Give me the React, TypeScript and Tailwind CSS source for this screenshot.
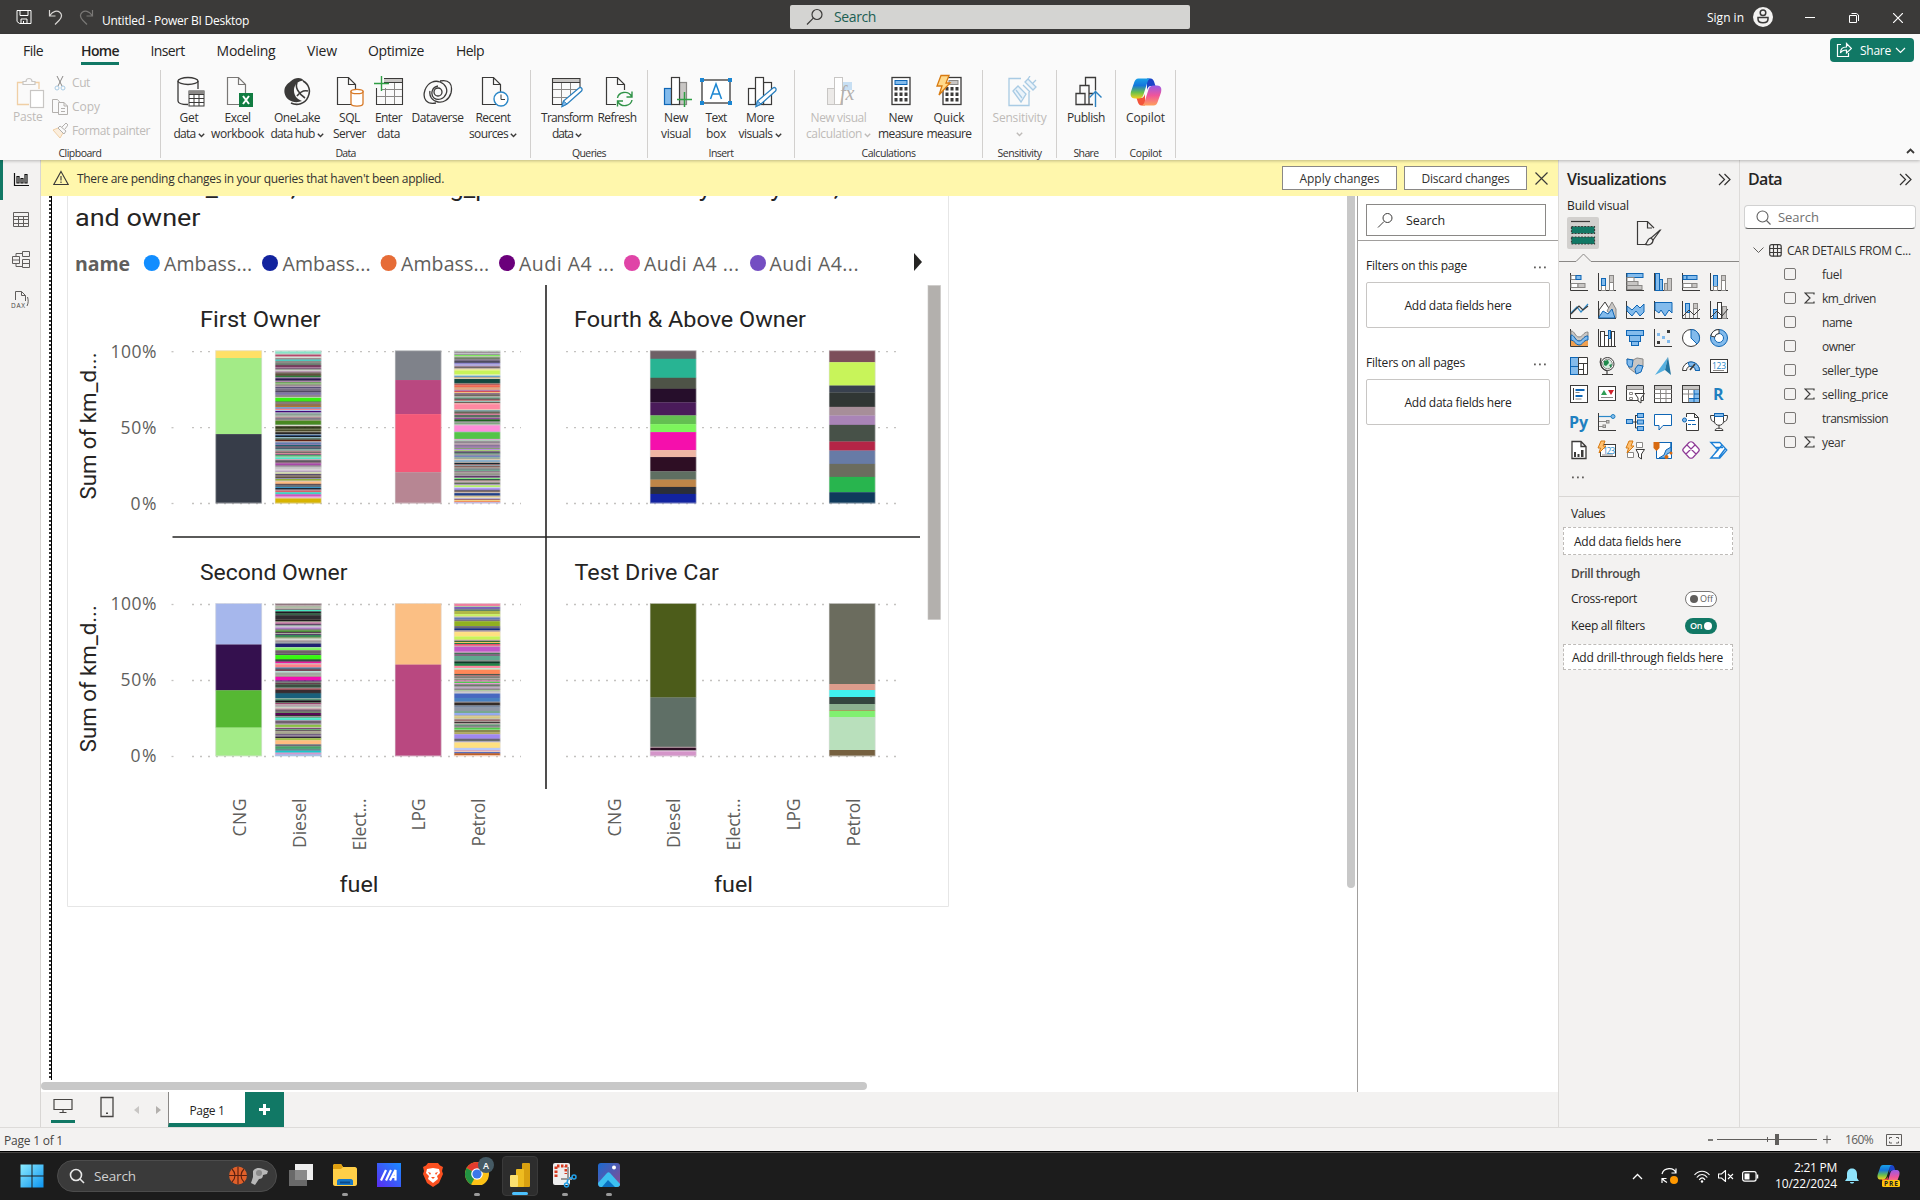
import { useLayoutEffect, useRef, type ReactNode } from "react";

const K = "#3b3a39";
const B = "#0f66b5";
const L = "#83bbec";
const G = "#c8c6c4";
const M = "#8a8886";
const GREEN = "#117865";
const UI = "'Open Sans','Noto Sans',sans-serif";
const DIN = "Roboto,'Liberation Sans',sans-serif";

/* Single line label whose tracking is adjusted so that it takes `w` pixels. */
function T({ w, c = "", children }: { w?: number; c?: string; children: string }) {
  const ref = useRef<HTMLSpanElement>(null);
  useLayoutEffect(() => {
    const el = ref.current;
    if (!el || !w) return;
    el.style.letterSpacing = "0px";
    const natural = el.getBoundingClientRect().width;
    el.style.letterSpacing = `${(w - natural) / children.length}px`;
  }, [w, children]);
  return (
    <span ref={ref} className={`inline-block shrink-0 whitespace-pre ${c}`}>
      {children}
    </span>
  );
}

function Ic({ w, h, c = "", children }: { w: number; h: number; c?: string; children: ReactNode }) {
  return (
    <svg width={w} height={h} viewBox={`0 0 ${w} ${h}`} fill="none" className={`shrink-0 ${c}`}>
      {children}
    </svg>
  );
}

const P = ({ d, s = K, f = "none", w = 1 }: { d: string; s?: string; f?: string; w?: number }) => (
  <path d={d} stroke={s} fill={f} strokeWidth={w} />
);
const Rc = ({ x, y, w, h, f = "none", s = K, sw = 1, r = 0 }: { x: number; y: number; w: number; h: number; f?: string; s?: string; sw?: number; r?: number }) => (
  <rect x={x} y={y} width={w} height={h} fill={f} stroke={s} strokeWidth={sw} rx={r} />
);

/* ---------- title bar ---------- */

function TitleBar() {
  return (
    <div className="flex h-[34px] shrink-0 items-center bg-[#3b3a39] text-white">
      <Ic w={16} h={16} c="ml-[16px]">
        <P s="#fff" d="M1 1.500h14v13H3.500L1 12.500zM4 1.500v5h8v-5M5 14v-4h6v4M7.500 14v-2" />
      </Ic>
      <Ic w={16} h={18} c="ml-[16px]">
        <P s="#d8d6d4" w={1.2} d="M1.500 2v6h6M1.800 7.500C5 3 9 2 12 4.500c3 3 1.500 5.500-1 8L7 16.500" />
      </Ic>
      <Ic w={16} h={18} c="ml-[14px]">
        <P s="#7a7876" w={1.2} d="M14.500 2v6h-6M14.200 7.500C11 3 7 2 4 4.500c-3 3-1.500 5.500 1 8l4 4" />
      </Ic>
      <div className="ml-[8px] mt-[7px] text-[12px] leading-[16px]"><T w={147}>Untitled - Power BI Desktop</T></div>
      <div className="ml-[541px] flex h-[24px] w-[400px] items-center rounded-[2px] bg-[#d4d4d2]">
        <Ic w={18} h={18} c="ml-[16px]">
          <circle cx="11" cy="6.500" r="5" stroke={K} strokeWidth="1.200" />
          <P w={1.2} d="M7.300 10.200L1 16.500" />
        </Ic>
        <div className="ml-[10px] text-[14px] leading-[20px] text-[#1c5f52]"><T w={42}>Search</T></div>
      </div>
      <div className="ml-[517px] mt-[2px] text-[12px] leading-[16px]"><T w={37}>Sign in</T></div>
      <Ic w={20} h={20} c="ml-[9px]">
        <circle cx="10" cy="10" r="10" fill="#f3f2f1" />
        <circle cx="10" cy="5.800" r="2.800" stroke={K} strokeWidth="1.500" />
        <P w={1.5} d="M5 10.500h10v1.500c0 5-10 5-10 0z" />
      </Ic>
      <Ic w={10} h={10} c="ml-[32px]"><P s="#fff" d="M0 5.500h10" /></Ic>
      <Ic w={10} h={10} c="ml-[34px] mt-[2px]"><P s="#fff" d="M.5 2.500h7v7h-7zM2.500 .5h5l2 1.500v6" /></Ic>
      <Ic w={10} h={10} c="ml-[34px] mt-[2px]"><P s="#fff" w={1.2} d="M0 0l10 10M10 0L0 10" /></Ic>
    </div>
  );
}

/* ---------- ribbon ---------- */

const page = "M1.500 1.500h11l7 7v20h-18zM12.500 1.500v7h7";

const ribbonIcons: Record<string, ReactNode> = {
  getdata: (
    <Ic w={28} h={32}>
      <P w={1.3} d="M1 5v20c0 2 4 3.500 10 3.500M21 5v8" />
      <ellipse cx="11" cy="5" rx="10" ry="3.500" stroke={K} strokeWidth="1.300" />
      <Rc x={12} y={15} w={15} h={15} f="#fff" />
      <rect x="12" y="15" width="15" height="3.500" fill={M} />
      <P d="M12 18.500h15M12 22.500h15M12 26.500h15M17 18v12M22 18v12" />
    </Ic>
  ),
  excel: (
    <Ic w={28} h={32}>
      <P s="#797775" w={1.2} d={page} />
      <rect x="13" y="17" width="14" height="14" fill="#107c41" />
      <P s="#fff" w={2} d="M17 20l6 8M23 20l-6 8" />
    </Ic>
  ),
  onelake: (
    <Ic w={28} h={30}>
      <path d="M8 4C12 0 19 0 21 4c-5-1-9 3-10 8-.500 5 2 10 8 12-7 3-16 0-17.500-8C.5 10 4 7 8 4z" fill={K} />
      <P w={1.6} d="M20 4c6 3 8 10 5 16-3 7-11 9-17 6M14 6c-2 4 1 10 8 15M25 14c-4-1-8 1-11 5" />
    </Ic>
  ),
  sql: (
    <Ic w={28} h={32}>
      <P w={1.2} d={page} />
      <path d="M15 15.500v12c0 3.500 12 3.500 12 0v-12z" fill="#fff" stroke="#d87a28" strokeWidth="1.300" />
      <ellipse cx="21" cy="15.500" rx="6" ry="2.200" fill="#fff" stroke="#d87a28" strokeWidth="1.300" />
    </Ic>
  ),
  enter: (
    <Ic w={30} h={32}>
      <rect x="10" y="2" width="19" height="4" fill={G} />
      <P w={1.1} d="M10 2.500h18.500v26h-26V12M10 6.500h18.500" />
      <P s={M} d="M8 13.500h20M3 20.500h25M11.500 12v16M20.500 7v21" />
      <P s="#2f9e44" w={1.4} d="M0 7.500h15M7.500 0v15" />
    </Ic>
  ),
  dataverse: (
    <Ic w={30} h={28}>
      <circle cx="15" cy="14" r="4" stroke={K} strokeWidth="1.300" />
      <P w={1.3} d="M13 25C4 27-1 21 2 12 5 4 12 2 17 4c6 2 8 8 6 12-2 5-8 7-12 4-4-4-2-11 4-12M17 3c9-2 13 3 11 12-2 7-8 10-13 9-6-1-9-6-8-11" />
    </Ic>
  ),
  recent: (
    <Ic w={28} h={32}>
      <P w={1.2} d={page} />
      <circle cx="20" cy="23" r="7" fill="#fff" stroke="#2b88c8" strokeWidth="1.400" />
      <P d="M20 18.500v5h4" />
    </Ic>
  ),
  transform: (
    <Ic w={32} h={32}>
      <rect x="2" y="2" width="27" height="4" fill={G} />
      <P w={1.1} d="M29 12V2.500H1.500v26h11M2 6.500h27" />
      <P s={M} d="M2 13.500h26M2 21.500h15M10.500 7v21M19.500 7v12" />
      <P s="#2b80bf" f="#fff" w={1.3} d="M28 12c2-1.500 4 1 2.500 3L16 28l-5 2.500 1.500-5.500z" />
      <P s="#2b80bf" f={L} d="M12.500 25l3.500 3-5 2.500z" />
    </Ic>
  ),
  refresh: (
    <Ic w={28} h={32}>
      <P w={1.2} d={page} />
      <rect x="11" y="14" width="17" height="17" fill="#fafafa" />
      <P s="#2f9247" w={1.4} d="M12.500 22c1-6 10-8 14-2M27 15.500V21h-5.500M27 24c-1 6-10 8-14 2M12.500 30.500V25H18" />
    </Ic>
  ),
  newvisual: (
    <Ic w={30} h={32}>
      <Rc x={1.5} y={12.500} w={7} h={16} f={L} s={B} sw={1.2} />
      <Rc x={16.500} y={6.500} w={7} h={22} f={G} s={M} sw={1.2} />
      <Rc x={8.500} y={1.500} w={8} h={27} f="#fff" sw={1.2} />
      <P s="#2f9e44" w={1.5} d="M14 23.500h15M21.500 16v15" />
    </Ic>
  ),
  textbox: (
    <Ic w={32} h={28}>
      <Rc x={2} y={2} w={28} h={23} sw={1.3} f="#fff" />
      {[[0, 0], [28, 0], [0, 23], [28, 23]].map(([x, y]) => (
        <rect key={`${x}-${y}`} x={x} y={y} width="4" height="4" fill="#1b86d2" />
      ))}
      <P s="#1b86d2" w={1.5} d="M10.500 21L16 6l5.500 15M12.500 16h7" />
    </Ic>
  ),
  more: (
    <Ic w={30} h={32}>
      <Rc x={1.500} y={12.500} w={7} h={16} f="#fff" sw={1.2} />
      <Rc x={16.500} y={6.500} w={8} h={22} f="#fff" sw={1.2} />
      <Rc x={8.500} y={1.500} w={8} h={27} f="#fff" sw={1.2} />
      <P s="#2b80bf" f="#fff" w={1.3} d="M26 12c2-1.500 4 1 2.500 3L14 28l-5 2.500 1.500-5.500z" />
      <P s="#2b80bf" f={L} d="M10.500 25l3.500 3-5 2.500z" />
    </Ic>
  ),
  calc: (
    <Ic w={30} h={32}>
      <Rc x={1.500} y={12.500} w={7} h={16} f="#eceae8" s={G} />
      <rect x="16" y="6" width="10" height="8" fill="#c7dff3" />
      <Rc x={8.500} y={1.500} w={8} h={27} f="#fff" s={G} />
      <text x="14" y="24" fontFamily="'Liberation Serif',serif" fontStyle="italic" fontSize="20" fill="#b3b0ad">fx</text>
    </Ic>
  ),
  measure: (
    <Ic w={20} h={32}>
      <Rc x={1} y={1.500} w={18} h={27} f="#fff" sw={1.300} />
      <Rc x={4} y={4.500} w={12} h={4} f={L} s={B} />
      <g fill={K}>
        {[11, 16.500, 22].flatMap((y) => [3.500, 8.500, 13.500].map((x) => <rect key={`${x}${y}`} x={x} y={y} width="3" height="3.500" />))}
      </g>
    </Ic>
  ),
  quick: (
    <Ic w={26} h={32} c="overflow-visible">
      <Rc x={7} y={1.500} w={18} h={27} f="#fff" sw={1.300} />
      <Rc x={13} y={4.500} w={9} h={4} f={G} s={M} />
      <g fill={K}>
        {[11, 16.500, 22].flatMap((y) => [9.500, 14.500, 19.500].map((x) => <rect key={`${x}${y}`} x={x} y={y} width="3" height="3.500" />))}
      </g>
      <P s="#d87a10" f="#ffd98a" w={1.300} d="M5-.5h8L10 7h4L3 19l3-9H1z" />
    </Ic>
  ),
  sensitivity: (
    <Ic w={30} h={32}>
      <P s="#a9cbe4" w={1.3} d="M14 2.500H2v27h20V16" />
      <P s="#a9cbe4" w={1.300} f="#eaf3fa" d="M6 15l5-5 8 8-5 8zM9 14l6 8M18 6l3-3 8 8-3 3zM21 3l2-3M26 7l3-3M16 9l7 7" />
    </Ic>
  ),
  publish: (
    <Ic w={28} h={32}>
      <P w={1.300} d="M2 28.500h9v-11H2zM11 28.500h8M6 17V9.500h9v19M11.500 9V1.500h10v13M15 17.500h4" />
      <P s="#2b80bf" w={1.400} d="M21.500 31V15M15.500 21.500l6-6 6 6" />
    </Ic>
  ),
  copilot: (
    <Ic w={32} h={30}>
      <CopilotArt />
    </Ic>
  ),
};

function CopilotArt() {
  return (
    <>
      <defs>
        <linearGradient id="cpA" x1="0" y1="0" x2="0" y2="1">
          <stop offset="0" stopColor="#1aa0e8" /><stop offset=".35" stopColor="#1476dc" /><stop offset=".7" stopColor="#6cc04a" /><stop offset="1" stopColor="#f5d020" />
        </linearGradient>
        <linearGradient id="cpB" x1="0" y1="0" x2="0" y2="1">
          <stop offset="0" stopColor="#9a5be6" /><stop offset=".5" stopColor="#f0559a" /><stop offset="1" stopColor="#ffa05a" />
        </linearGradient>
      </defs>
      <path d="M17 1.500h3.500c2 0 3 1.500 3.500 3l1.500 4.500h-4c-3 0-3.500 1.500-4.500 4z" fill="#1b44c8" />
      <path d="M15 28.500h-3.500c-2 0-3-1.500-3.500-3L6.500 21h4c3 0 3.500-1.500 4.500-4z" fill="#f2543a" />
      <path d="M8.500 1.500H21c-2 0-3 1.500-4 5l-3.500 11c-1 3-2.500 4-5 4H5c-4 0-5-3-4-7L4 6c1-3 2-4.500 4.500-4.500z" fill="url(#cpA)" />
      <path d="M23.500 28.500H11c2 0 3-1.500 4-5l3.500-11c1-3 2.500-4 5-4H27c4 0 5 3 4 7l-3 8.500c-1 3-2 4.500-4.500 4.500z" fill="url(#cpB)" />
    </>
  );
}

type Btn = { i: string; w: number; a: [string, number]; b?: [string, number]; drop?: boolean; off?: boolean; sh?: boolean };
type Grp = { w: number; pl: number; label: [string, number]; items: Btn[] };

const groups: Grp[] = [
  {
    w: 370, pl: 5, label: ["Data", 20], items: [
      { i: "getdata", w: 46, a: ["Get", 19], b: ["data", 22], drop: true, sh: true },
      { i: "excel", w: 51, a: ["Excel", 26], b: ["workbook", 53], sh: true },
      { i: "onelake", w: 68, a: ["OneLake", 46], b: ["data hub", 44], drop: true },
      { i: "sql", w: 37, a: ["SQL", 21], b: ["Server", 33] },
      { i: "enter", w: 41, a: ["Enter", 27], b: ["data", 23] },
      { i: "dataverse", w: 57, a: ["Dataverse", 52] },
      { i: "recent", w: 54, a: ["Recent", 35], b: ["sources", 39], drop: true, sh: true },
    ],
  },
  {
    w: 117, pl: 8, label: ["Queries", 34], items: [
      { i: "transform", w: 56, a: ["Transform", 52], b: ["data", 21], drop: true },
      { i: "refresh", w: 44, a: ["Refresh", 39], sh: true },
    ],
  },
  {
    w: 147, pl: 10, label: ["Insert", 25], items: [
      { i: "newvisual", w: 36, a: ["New", 24], b: ["visual", 30], sh: true },
      { i: "textbox", w: 44, a: ["Text", 21], b: ["box", 20] },
      { i: "more", w: 44, a: ["More", 28], b: ["visuals", 34], drop: true, sh: true },
    ],
  },
  {
    w: 188, pl: 7, label: ["Calculations", 54], items: [
      { i: "calc", w: 73, a: ["New visual", 56], b: ["calculation", 56], drop: true, off: true, sh: true },
      { i: "measure", w: 51, a: ["New", 24], b: ["measure", 45] },
      { i: "quick", w: 46, a: ["Quick", 31], b: ["measure", 45] },
    ],
  },
  { w: 74, pl: 0, label: ["Sensitivity", 44], items: [{ i: "sensitivity", w: 73, a: ["Sensitivity", 54], b: ["", 0], drop: true, off: true, sh: true }] },
  { w: 59, pl: 0, label: ["Share", 25], items: [{ i: "publish", w: 58, a: ["Publish", 38], sh: true }] },
  { w: 60, pl: 0, label: ["Copilot", 32], items: [{ i: "copilot", w: 59, a: ["Copilot", 39] }] },
];

function RibbonGroup({ g }: { g: Grp }) {
  return (
    <div className="flex h-[88px] flex-col border-r border-[#d2d0ce]" style={{ width: g.w }}>
      <div className="flex h-[76px] shrink-0" style={{ paddingLeft: g.pl }}>
        {g.items.map((b) => (
          <div key={b.i} className={`flex shrink-0 flex-col items-center text-[12px] leading-[16px] ${b.off ? "text-[#bebbb8]" : "text-[#323130]"}`} style={{ width: b.w }}>
            <div className={`flex h-[40px] items-center pt-[3px] ${b.sh ? "pl-[4px]" : ""}`}>{ribbonIcons[b.i]}</div>
            <T w={b.a[1]}>{b.a[0]}</T>
            {b.b && (
              <div className="flex items-center gap-[2px]">
                {b.b[0] && <T w={b.b[1]}>{b.b[0]}</T>}
                {b.drop && <Ic w={7} h={5} c={b.b[0] ? "mt-[2px]" : "mt-[6px]"}><P s={b.off ? "#bebbb8" : K} w={1.4} d="M.8 .8l2.700 2.700L6.200 .8" /></Ic>}
              </div>
            )}
          </div>
        ))}
      </div>
      <div className="flex justify-center text-[10.500px] leading-[14px] text-[#323130]"><T w={g.label[1]}>{g.label[0]}</T></div>
    </div>
  );
}

function Ribbon() {
  const menu: [string, number, string][] = [
    ["File", 20, "ml-[23px]"], ["Home", 38, "ml-[38px]"], ["Insert", 34, "ml-[31.500px]"], ["Modeling", 59, "ml-[32px]"],
    ["View", 30, "ml-[31.500px]"], ["Optimize", 56, "ml-[31px]"], ["Help", 28, "ml-[32px]"],
  ];
  return (
    <div className="relative z-10 h-[126px] shrink-0 bg-[#fafafa] shadow-[0_1px_3px_rgba(0,0,0,0.25)]">
      <div className="flex h-[36px] items-start">
        {menu.map(([t, w, ml]) => (
          <div key={t} className={`${ml} mt-[7px] flex h-[24px] flex-col text-[14px] leading-[19px] text-[#252423] ${t === "Home" ? "border-b-[3px] border-[#117865] font-semibold" : ""}`}>
            <T w={w}>{t}</T>
          </div>
        ))}
        <div className="ml-auto mr-[6px] mt-[4px] flex h-[24px] w-[84px] items-center rounded-[4px] bg-[#117865] text-[12px] text-white">
          <Ic w={16} h={16} c="ml-[6px]">
            <P s="#fff" w={1.2} d="M5 2.500H1.500v12h11V11M4.500 11c0-4 2-6 6-6V1.500l5 5-5 4.500V8c-3 0-5 1-6 3z" />
          </Ic>
          <div className="ml-[8px] mt-[2px] leading-[16px]"><T w={31}>Share</T></div>
          <Ic w={11} h={7} c="ml-[4px]"><P s="#fff" w={1.2} d="M1 1l4.500 4.500L10 1" /></Ic>
        </div>
      </div>
      <div className="flex">
        <div className="flex h-[88px] w-[161px] flex-col border-r border-[#d2d0ce] text-[12px] leading-[16px] text-[#bebbb8]">
          <div className="flex h-[76px] shrink-0">
            <div className="flex w-[42px] flex-col pl-[13px]">
              <Ic w={32} h={32} c="ml-[3px] mt-[7px]">
                <P s="#f0cfa5" w={1.3} d="M7 5.500H1.500v22H13M19 5.500h4V12" />
                <P s={G} w={1.2} d="M7 7.500v-3h3c0-4 6-4 6 0h3v3z" />
                <Rc x={14.500} y={13.500} w={13} h={17} f="#fff" s={G} sw={1.2} />
              </Ic>
              <T w={28}>Paste</T>
            </div>
            <div className="flex flex-col pl-[10px] pt-[1px]">
              <div className="flex h-[24px] items-center">
                <Ic w={16} h={16}>
                  <P s={M} d="M5 1l5 10M11 1L6 11" />
                  <circle cx="5" cy="13" r="2" stroke="#a9cbe4" /><circle cx="11" cy="13" r="2" stroke="#a9cbe4" />
                </Ic>
                <div className="ml-[4px]"><T w={18}>Cut</T></div>
              </div>
              <div className="flex h-[24px] items-center">
                <Ic w={16} h={16}><P s="#b3b0ad" d="M6 13.500H.5V.5h5l2.500 3M6.500 3.500H12l3.500 3.500v8.500h-9zM12 3.500V7h3.500M9 9.500h4M9 12.500h4" /></Ic>
                <div className="ml-[4px]"><T w={28}>Copy</T></div>
              </div>
              <div className="flex h-[24px] items-center">
                <Ic w={16} h={16}>
                  <P s="#f0cfa5" f="#fbeedd" d="M1 7l5-2 5 5-3 5z" />
                  <P s="#b3b0ad" d="M6 5l2-2 6 5-2 3zM10 4l4-4 2 2-3 4" />
                </Ic>
                <div className="ml-[4px]"><T w={78}>Format painter</T></div>
              </div>
            </div>
          </div>
          <div className="flex justify-center text-[10.500px] leading-[14px] text-[#323130]"><T w={43}>Clipboard</T></div>
        </div>
        {groups.map((g) => <RibbonGroup key={g.label[0]} g={g} />)}
        <Ic w={9} h={6} c="ml-auto mr-[5px] mt-[78px]"><P w={1.800} d="M1 5l3.500-3.500L8 5" /></Ic>
      </div>
    </div>
  );
}

/* ---------- chart ---------- */

type Seg = [string, number];

/* "colour height" pairs, top to bottom, in pixels. */
const parse = (s: string): Seg[] => s.trim().split(/\s+/).map((p) => { const [c, h] = p.split(":"); return [`#${c}`, Number(h)]; });

const bars: { x: number; y: number; s: Seg[] }[] = [
  { x: 215.500, y: 350.500, s: parse("ffe066:7.500 a3eb87:76 373d49:69") },
  {
    x: 275, y: 350.500, s: parse(`b8ddd0:1 86e5c8:2 c0b8b8:1 b6486c:1.500 d0a0a8:1 c8e8d8:1 75555c:1 4fc8be:1.500 8c8c88:2 6b7c70:2 622346:1.500 a87898:1.500
    5a3858:1 a0b49a:1 dcc8d8:1 8a6080:1 706858:1.500 55402c:1.500 2e7c3a:1.500 908098:1 280e50:1.500 605870:1 b088b0:1 72a060:1.500 94c080:1 706068:1 ccb8c0:1
    585078:1.500 7a7088:2 504860:1.500 807898:1.500 584898:1 9890a0:1 605850:1 d8d0d8:1 38f010:3 50a040:1 8a7a78:2 907050:2 b06820:1 6898d0:1.500 ff7078:1
    c8e0f8:1 400878:1.500 b0a8b8:1 68a090:1 888078:1 a0c8b8:1 c08890:1 807888:2 98a080:1 488820:3 70a060:1 d8d8c8:1 504c38:1 202808:1.500 808860:1 303010:1
    a0a088:1 504840:1 202020:1 8898a8:1 305080:1 101820:1 90b8c8:1 507060:1.500 602010:1.500 b0a0a0:1 6078b0:1.500 9080b0:1 206070:1.500 703850:1 486070:1.500
    80a8a0:1.500 c08890:1 586860:1 e09098:1 885880:1 50b070:1.500 90c8a0:1 50e8c8:1.500 c0a0b0:1 605860:2 805870:1 a848a8:2 787078:1 a8a0a8:1 c8c8c8:2 e0d8e0:1
    a888b8:1 c8d8b8:1 e8e8b0:1 504870:1 887870:2 605040:1 9090b0:1 88a830:1.500 d8c0b0:1 ffbc80:2 604850:1 687078:2 3898c8:1 182838:1.500 a08890:1 d86068:1.500
    40d0c0:2 c850b8:1.500 e088d8:1.500 e0b8c0:1 d8b400:4.500`),
  },
  { x: 395, y: 350.500, s: parse("7f828a:29.500 b94880:34 f45878:58 b78693:31") },
  {
    x: 454, y: 350.500, s: parse(`c8e8d0:1 887880:1 c8c8d0:1 98989a:1 80e860:1 b0c8a0:1 708068:2 7a6888:1 504c60:2 9088d0:1.500 b0a8d8:1.500 907080:1 504848:1 e0c8b0:1 e8f080:1
    c8f458:3.500 e8f0c0:1 50a0d8:1 c0a890:1 d8d0b0:1 104840:3.500 8a8078:1 b05858:1 f06850:2 c89070:1 f0a060:1 b090c0:1 d04058:1 f0c080:1 907090:1 706860:2 b0a8a8:1
    50a078:1 584048:1 c87878:1 98c8c0:1 706058:1 f0a8a8:1 ff88a0:4.500 e8c0b0:1 488890:1 686858:2 f080a8:1 587060:2 988890:1 803090:1 206020:2 a090a0:1 80a880:1.500
    b8b0b0:1 ff8cd8:5 d0a0d0:1 54c448:6 d8a8d0:1 b0c8b8:1 908890:2 b098a8:1.500 887098:1.500 a880b8:1 80a070:1 b890d8:1 a0c870:1 705878:1 303848:1 68a078:1 988898:1
    6878c0:1 90b0a8:1 a0a898:1 d8c8b0:1 80a8c8:1.500 b8b0a8:1 182830:1 906868:1 8098a0:1 703830:1 a8a098:1 606870:1 70a890:1.500 805870:1 a8a8a0:1 707860:1 b8b0b8:1
    583860:1 907898:1 80e880:1 184030:1 9a8078:1 c8a8b0:1 60705c:1.500 a890b8:1 b8f068:1.500 d0d8e8:1 a890f0:1.500 686078:1 807068:1 c8b8b0:1 204088:2 787888:1
    ffe078:1 c8d0f8:1 905870:1 f0d080:1 f09060:1 b8a8e0:1`),
  },
  {
    x: 650, y: 350.500,
    s: parse("6e6066:8.300 28b493:19 4e5347:11 260e2b:13.700 4a1b5a:13 64bf51:8.700 7df45c:8 f50fac:18 efb5a4:7 2e0e24:14.300 5f6f62:8.300 be8548:7.300 2b2e38:7 1223a0:9.300"),
  },
  {
    x: 829, y: 350.500,
    s: parse("7c4e5a:11.700 c8f45a:23.300 38404e:7 303634:14.300 a78e99:8.700 a984b7:9.300 475148:16.700 b52546:9 677ba6:13.300 6b6c5e:13 28b54e:15.300 0f3a5c:11"),
  },
  { x: 215.500, y: 603.300, s: parse("a6b7ec:41.200 34104e:45.800 56b833:37.300 a3eb87:28.400") },
  {
    x: 275, y: 603.300, s: parse(`907880:2 c0b0b0:1 88a880:1 c8d0c0:1 906070:1 48e8c0:1.500 201820:1.500 386048:2 302c30:3.500 504848:1 181818:1 888878:1 c880a8:1.500 604868:1.500 90b8a0:1
    d8b8e0:1 a878c0:1.500 706870:1 489030:1.500 584050:1 a8a8a0:1 503860:1 208048:1.500 88a070:1.500 b8c8b0:1 e0d8d8:1 807070:1 a8a8b0:1 808890:1 202070:3 a0e0a0:1
    80f060:2 706068:3 585060:1.500 38f810:4 083010:1 202838:1 e8189c:1.500 c0a8b8:1 ff8088:3 2878b0:1 504048:1 784858:1.500 b0f0e0:1 a0a8a0:3 90b080:1 f010b0:3.500
    401060:1 788078:1.500 502838:1 385040:3 607870:1 c84858:1 382c30:3 285868:1 18607c:4 80a898:1 287850:1 181018:1.500 607060:1 903060:1 b8a0a8:2 98a8a0:1 d8d8c8:1
    b87890:1 706070:2 70a068:1 580858:2 303830:1 a08898:1 48a880:1 40f0d0:1.500 a0a0b0:1 706070:2.500 b0a0b8:1 88c040:2 c8c8b0:1 784878:1 68a878:1 605058:1 a8a890:2.500
    706080:1 9888a0:1.500 302838:1.500 a0c048:2 ffbc80:3.500 808080:1 585060:1 48a068:2 209060:1 706888:1 18c8c8:1.500 70a8c8:1 e080c0:1 88b0e8:1.500`),
  },
  { x: 395, y: 603.300, s: parse("fbbf84:61.300 b94880:91.400") },
  {
    x: 454, y: 603.300, s: parse(`f080a0:2.500 b0c8a8:1 7050b8:1.500 808890:1 588068:1 b0b848:3 c8f060:2 c8c0a0:1 6078b8:2 787080:1.500 90b020:4.500 686878:1 585060:1 183080:2 c8b0a0:1.500 ffe080:4
    c8f458:3 d0a8b0:1 206030:1 f8c860:1 207848:1 f04868:1.500 c8b0b8:1 c058c8:4.500 e0a0d0:1 387850:1 806880:2 60a890:4 707870:1 103828:2 208848:2 ff88a0:2 c0e8d0:1.500
    ff8858:4 505850:1 b07070:1 808078:2 b0a0a0:1 607858:1 f070c8:1 50c850:1.500 f088d8:1 687868:1.500 a098a0:1.500 c0a8c8:1 706870:1 b0c8a0:1.500 b8b0b8:1 c8c8c8:1
    4868c0:4 4880c0:3.500 908888:1 342c28:2.500 7888a0:2 9098a8:3 78a890:2 90a8f0:2 b0a890:1 d8c880:2 b0b8a8:1 803840:1 c0b8b0:1 403838:1.500 c8b0b0:1 409860:1
    706070:1 a0a0a0:1 48c040:1 80e880:1 888850:2 b0a860:2 a088f0:4 686078:1.500 505850:1 b0a8c8:1 ffe080:5 b8c8f8:2 d8a8c0:1 e8c8b8:1 3050b8:1 b85820:1.500 ffb890:1`),
  },
  { x: 650, y: 603.300, s: parse("4c5c1a:94.200 5f6f66:49.300 c0a8b0:1 2e0e24:2.700 e8dce8:.8 d495c9:4.700") },
  { x: 829, y: 603.300, s: parse("6b6c5e:80.700 dc9c8c:6 40f0ee:7 34443e:7 8cb090:6 a3a060:1 80f070:6 b9e0bc:33 75603f:6") },
];

function Chart() {
  const tx = (x: number, y: number, t: string, len: number, size: number, opts: { rot?: boolean; end?: boolean; font?: string; fill?: string; bold?: boolean } = {}) => (
    <text
      key={`${t}${x}${y}`}
      transform={`translate(${x} ${y})${opts.rot ? " rotate(-90)" : ""}`}
      textLength={len}
      lengthAdjust={opts.font ? "spacingAndGlyphs" : "spacing"}
      textAnchor={opts.end ? "end" : "start"}
      fontFamily={opts.font ?? UI}
      fontSize={size}
      fontWeight={opts.bold ? 700 : 400}
      fill={opts.fill ?? "#605e5c"}
    >{t}</text>
  );
  const dk = { font: DIN, fill: "#252423" };
  return (
    <svg width="1306" height="884" viewBox="41 196 1306 884" className="shrink-0 overflow-hidden">
      <path d="M51.500 196v884" stroke="#000" strokeWidth="1" />
      <path d="M50 196v884" stroke="#333" strokeWidth="2" strokeDasharray="2 2" />
      <path d="M67.500 196v710.500h881V196" fill="none" stroke="#e6e6e6" />
      {tx(76, 195.600, "Sum of km_driven,", 220, 23, dk)}
      {tx(303, 195.600, "Sum of selling_price", 228, 23, dk)}
      {tx(540, 195.600, "and Count of year by fuel,", 299, 23, dk)}
      {tx(846, 195.600, "name", 62, 23, dk)}
      {tx(75, 225.700, "and owner", 125.500, 23.500, dk)}
      {tx(75, 270.700, "name", 55, 19.500, { bold: true })}
      {([[151.800, 164, "Ambass...", 88, "#118dff"], [270, 282.500, "Ambass...", 88, "#12239e"], [388.600, 401, "Ambass...", 88, "#e66c37"], [507, 519, "Audi A4 ...", 95, "#6b007b"], [632, 644, "Audi A4 ...", 95, "#e044a7"], [758, 769.500, "Audi A4...", 89, "#744ec2"]] as [number, number, string, number, string][]).map(([cx, x, t, w, c]) => (
        <g key={cx}>
          <circle cx={cx} cy="263" r="8" fill={c} />
          {tx(x, 270.700, t, w, 19.500)}
        </g>
      ))}
      <path d="M914 253l8 9-8 9z" fill="#252423" />
      {[351.700, 427.700, 503.500, 604.500, 680.500, 756.500].map((y) => (
        <g key={y} stroke="#c4c2c0" strokeWidth="1.300">
          <path d={`M171.500 ${y}h2`} />
          <path d={`M192 ${y}H521M566 ${y}H896`} strokeDasharray="2 6" />
        </g>
      ))}
      {bars.map((b) => {
        const total = b.s.reduce((a, s) => a + s[1], 0);
        const k = 152.700 / total;
        let y = b.y;
        return (
          <g key={`${b.x}-${b.y}`}>
            {b.s.map(([c, h], i) => {
              const r = <rect key={i} x={b.x} y={y} width="46.300" height={h * k + 0.2} fill={c} />;
              y += h * k;
              return r;
            })}
            <rect x={b.x + 0.2} y={b.y + 0.2} width="46" height="152.300" fill="none" stroke="#ddd" strokeOpacity=".55" />
          </g>
        );
      })}
      <path d="M546 285v504M172.500 537h747.500" stroke="#252423" strokeWidth="1.600" />
      <rect x="928" y="285.500" width="12.500" height="334" fill="#b3b0ad" stroke="#c8c6c4" strokeWidth=".6" />
      {tx(200, 326.700, "First Owner", 120.500, 22.500, dk)}
      {tx(574, 326.700, "Fourth & Above Owner", 232, 22.500, dk)}
      {tx(200, 580, "Second Owner", 147.500, 22.500, dk)}
      {tx(574.500, 580, "Test Drive Car", 144.500, 22.500, dk)}
      {[0, 252.700].map((o) => (
        <g key={o}>
          {tx(156.500, 357.500 + o, "100%", 46, 17.500, { end: true })}
          {tx(156.500, 433.500 + o, "50%", 36, 17.500, { end: true })}
          {tx(156.500, 509.500 + o, "0%", 26, 17.500, { end: true })}
          {tx(95.700, 499.500 + o, "Sum of km_d...", 147, 22.500, { ...dk, rot: true })}
        </g>
      ))}
      {[0, 374.500].map((o) => (
        <g key={o}>
          {tx(246 + o, 798.500, "CNG", 38, 17.500, { rot: true, end: true })}
          {tx(305.500 + o, 798.500, "Diesel", 49.500, 17.500, { rot: true, end: true })}
          {tx(365.500 + o, 798.500, "Elect...", 52, 17.500, { rot: true, end: true })}
          {tx(425 + o, 798.500, "LPG", 32, 17.500, { rot: true, end: true })}
          {tx(485 + o, 798.500, "Petrol", 48, 17.500, { rot: true, end: true })}
          {tx(339.500 + o, 891.500, "fuel", 39, 22.500, dk)}
        </g>
      ))}
    </svg>
  );
}

/* ---------- visual gallery ---------- */

const ax = <P d="M.5 0v17.500H18" />;
const viz: ReactNode[] = [
  <>{ax}<Rc x={1} y={2.500} w={5} h={4} f="#fff" s={M} /><Rc x={6} y={2.500} w={5} h={4} f={L} s={B} /><Rc x={1} y={10.500} w={7} h={4} f="#fff" s={M} /><Rc x={8} y={10.500} w={7} h={4} f={G} s={M} /></>,
  <>{ax}<Rc x={3.500} y={11.500} w={4} h={6} f="#fff" s={M} /><Rc x={3.500} y={5.500} w={4} h={7} f={L} s={B} /><Rc x={11.500} y={9.500} w={4} h={8} f="#fff" s={M} /><Rc x={11.500} y={2.500} w={4} h={7} f={G} s={M} /></>,
  <>{ax}<Rc x={1} y={.5} w={16} h={4} f={L} s={B} /><Rc x={1} y={4.500} w={7} h={4} f="#fff" s={M} /><Rc x={1} y={8.500} w={11} h={4} f={G} s={M} /><Rc x={1} y={12.500} w={15} h={4} f={G} s={M} /></>,
  <>{ax}<Rc x={1.500} y={.5} w={4} h={17} f={L} s={B} /><Rc x={5.500} y={6.500} w={3} h={11} f={L} s={B} /><Rc x={10.500} y={10.500} w={3} h={7} f={G} s={M} /><Rc x={13.500} y={5.500} w={4} h={12} f={G} s={M} /></>,
  <>{ax}<Rc x={1} y={2.500} w={4} h={4} f={L} s={B} /><Rc x={5} y={2.500} w={10} h={4} f={L} s={B} /><Rc x={1} y={10.500} w={9} h={4} f="#fff" s={M} /><Rc x={10} y={10.500} w={5} h={4} f={G} s={M} /></>,
  <>{ax}<Rc x={3.500} y={2.500} w={4} h={11} f={L} s={B} /><Rc x={3.500} y={13.500} w={4} h={4} f="#fff" s={M} /><Rc x={11.500} y={2.500} w={4} h={5} f={G} s={M} /><Rc x={11.500} y={7.500} w={4} h={10} f="#fff" s={M} /></>,
  <>{ax}<P d="M1 12l6-6 4 5 7-8" s="#2b88c8" w={1.200} /><P d="M1 13l5-5 3-3 4 4 5-4" w={1.200} /></>,
  <>{ax}<P d="M1 9l6-8 10 16H1z" f="#fff" /><P d="M18 17V8l-4-7-5 9z" f={G} s={M} /><P d="M1 16l4-6 5 3 4-5 3 9H1z" f={L} s={B} /></>,
  <>{ax}<P d="M1 5l5 4 5-5 3 3 4-4v8l-4 4-4-5-4 5-5-5z" f={L} s={B} /></>,
  <>{ax}<P d="M1 1.500h17V12l-3-3-4 6-4-6-2 3-4-3z" f={L} s={B} /></>,
  <>{ax}<Rc x={3.500} y={2.500} w={4} h={9} f={L} s={B} /><Rc x={11.500} y={2.500} w={4} h={5} f={G} s={M} /><P d="M3.500 11v6M7.500 12v5M11.500 8v9M15.500 8v9" s={M} /><P d="M1 15l6-6 5 5 6-6" /></>,
  <>{ax}<Rc x={3.500} y={8.500} w={4} h={9} f={L} s={B} /><Rc x={12.500} y={5.500} w={4} h={12} f={G} s={M} /><Rc x={7.500} y={1.500} w={4} h={16} f="#fff" /><P d="M1 16l6-6 5 5 6-7" /></>,
  <>{ax}<rect x="1" y="8" width="17" height="9" fill="#f0a050" /><P d="M1 2c4 0 4 6 8 6s4-5 9-5v4c-5 0-5 5-9 5S5 7 1 7z" f={G} s={M} /><P d="M1 6c4 0 4 6 8 6s4-5 9-5v4c-5 0-5 5-9 5S5 11 1 11z" f={L} s={B} /></>,
  <>{ax}<Rc x={2.500} y={2.500} w={4} h={15} f="#fff" /><Rc x={6.500} y={6.500} w={4} h={11} f="#fff" /><Rc x={10.500} y={1.500} w={2} h={8} f={L} s={B} /><Rc x={13.500} y={2.500} w={3} h={15} f="#fff" /></>,
  <><Rc x={.5} y={1.500} w={17} h={5} f={L} s={B} /><Rc x={3.500} y={6.500} w={11} h={6} f={L} s={B} /><Rc x={5.500} y={12.500} w={7} h={4} f={L} s={B} /></>,
  <>{ax}<rect x="13" y="1" width="3" height="3" fill={K} /><rect x="3" y="12" width="3" height="3" fill={K} /><rect x="3" y="4" width="3" height="3" fill={L} /><rect x="8" y="7" width="3" height="3" fill={L} /><rect x="13" y="11" width="3" height="3" fill={L} /></>,
  <><circle cx="9" cy="9" r="8.500" fill="#fff" stroke={K} /><P d="M9 .5a8.500 8.500 0 0 1 6 14.500L9 9z" f={L} s={B} /></>,
  <><circle cx="9" cy="9" r="6.500" stroke={L} strokeWidth="4" /><circle cx="9" cy="9" r="8.500" stroke={B} /><circle cx="9" cy="9" r="4.500" stroke={B} fill="#fff" /><P d="M9 .5A8.500 8.500 0 0 0 .8 7l4 1A4.500 4.500 0 0 1 9 4.500z" f="#fff" /></>,
  <><Rc x={.5} y={.5} w={8} h={17} f={L} s={B} /><P s={B} d="M.5 9.500h8" /><P f="#fff" d="M8.500 .5h9v17h-9zM8.500 6.500h9M13.500 6.500v11M8.500 12.500h5" /></>,
  <><circle cx="9.500" cy="7" r="6.500" stroke={K} fill="#fff" /><circle cx="9.500" cy="7" r="4.800" fill="#d6ece0" stroke={M} /><path d="M6 4l4-1 1 3-3 3-2-1zM11 8l3-1-1 4z" fill="#1f8a4c" /><P w={1.200} d="M3 1c-2 5 0 11 6 13v3M4 17.500h11" /></>,
  <><P d="M1 2l6 1 4-2 6 1v7l-4 7-5-1-5-4z" f={G} s={M} /><P d="M1 2l6 1-1 7H3L1 7zM9 12l3-4 5 1-2 6-5 2z" f={L} s={B} /></>,
  <><path d="M14 0L1 18l10-5z" fill="#56b0e0" /><path d="M14 0l3 18-6-5z" fill="#2274a0" /></>,
  <><P d="M.5 13.500a8.500 8.500 0 0 1 17 0h-4a4.500 4.500 0 0 0-9 0z" f="#fff" /><P d="M6 5.500a8.500 8.500 0 0 1 11.500 8h-4a4.500 4.500 0 0 0-6-4z" f={L} s={B} /><P w={1.600} d="M8 13l5-6" /></>,
  <><Rc x={.5} y={2.500} w={17} h={13} f="#fff" /><text x="2" y="11.500" fontFamily={UI} fontSize="8.500" fill="#2b88c8" textLength="14">123</text><P s={M} d="M3 13.500h11" /></>,
  <><Rc x={.5} y={.5} w={17} h={17} f="#fff" /><P d="M3.500 3v12" /><P s={B} w={2} d="M5.500 5h9M5.500 11h7" /><P s={M} d="M5.500 7.500h4M5.500 14h6" /></>,
  <><Rc x={.5} y={1.500} w={17} h={14} f="#fff" /><path d="M3 10l3-5 3 5z" fill="#2f9e55" /><path d="M10 5h6l-3 5z" fill="#d0202a" /><P s={M} d="M3 12.500h12" /></>,
  <><P f="#fff" d="M.5 .5h17v15H.5z" /><rect x="1" y="1" width="16" height="3" fill={G} /><P s={M} d="M.5 4.500h17M3.500 7.500h3v2h-3zM3.500 12.500h3v2h-3z" /><P f="#fff" d="M9 8.500h9.500L15 13v5l-3-2v-3z" /></>,
  <><Rc x={.5} y={.5} w={17} h={17} f="#fff" /><rect x="1" y="1" width="16" height="3" fill={G} /><P s={M} d="M.5 4.500h17M.5 8.500h17M.5 13.500h17M6.500 4v13M12 4v13" /></>,
  <><Rc x={.5} y={.5} w={17} h={17} f="#fff" /><rect x="1" y="1" width="16" height="3" fill={G} /><path d="M12 5h6v13H7v-5h5z" fill={L} /><P s={B} d="M12 4.500v13M7 13.500h11M12 9h6" /><P s={M} d="M.5 4.500h17M.5 9h11M6.500 4v13" /><Rc x={.5} y={.5} w={17} h={17} /></>,
  <><text x="3" y="14.500" fontFamily={UI} fontWeight="700" fontSize="16" fill="#1f80c0">R</text></>,
  <><text x="-1" y="14.500" fontFamily={UI} fontWeight="700" fontSize="16" fill="#1f80c0" textLength="19">Py</text></>,
  <>{ax}<P s="#2b88c8" w={1.200} d="M1 3.500h12" /><circle cx="15" cy="3.500" r="2" fill={L} stroke="#1f80c0" /><P s={M} d="M1 8.500h7M1 13.500h4" /><Rc x={8.500} y={7.500} w={2.500} h={2.500} s={M} f={G} /><Rc x={5} y={12} w={2.500} h={2.500} s={M} f={G} /></>,
  <><P d="M7 9h5M9 2.500h3M9.500 2v13h3" /><Rc x={.5} y={6.500} w={6} h={4} f={L} s={B} /><Rc x={11.500} y={.5} w={6} h={4} f={L} s={B} /><Rc x={11.500} y={7} w={6} h={4} f={L} s={B} /><Rc x={11.500} y={13.500} w={6} h={4} f={L} s={B} /></>,
  <><P s={B} f="#fff" d="M.5 1.500h17v11H9l-4 4.500v-4.500H.5z" /></>,
  <><P f="#fff" d="M4.500 4V.5h8l4 4v13h-12V10M12.500 .5v4h4" /><circle cx="2.500" cy="7" r="2" fill={L} stroke={B} /><P s={B} d="M6 7.500h7M6 11.500h3M10 11.500h4" /></>,
  <><P f="#fff" d="M4.500 .5h9v8c0 5-9 5-9 0zM4.500 2.500H.5c0 4 1 6 4 6.500M13.500 2.500h4c0 4-1 6-4 6.500M9 12v3M5 17.500c0-3 8-3 8 0z" /><P s={B} f={L} d="M4.500 .5h9v3h-9z" /></>,
  <><P f="#fff" w={1.300} d="M2 .5h9l5 5v12H2zM11 .5v5h5" /><path d="M4 11h2v5H4zM7.500 13h2v3h-2zM11 9h2.500v7H11z" fill={K} /></>,
  <><Rc x={2.500} y={3.500} w={15} h={12} f="#fff" /><text x="5" y="12.500" fontFamily={UI} fontSize="8.500" fill="#2b88c8" textLength="12">123</text><P s={M} d="M4 14h11" /><P s="#d87a10" f="#ffc070" d="M3 0h4L5 5h3L1 12l1.500-5H0z" /></>,
  <><P s={M} f="#fff" d="M10.500 1.500h6v5h-6zM1.500 11.500h6v5h-6z" /><P f="#fff" d="M10 8.500h8.500L15.500 13v5l-3-2v-3z" /><P s="#d87a10" f="#ffc070" d="M3 0h4L5 5h3L1 12l1.500-5H0z" /></>,
  <><P s={B} f="#fff" d="M2.500 1.500h15v16h-15z" /><path d="M17 1v5l-5 3-2 5-5 3h7l1-4 4-2z" fill={L} stroke={B} /><path d="M-.5 1h6v6l-3 3-3-3z" fill="#d86a10" /><circle cx="12.500" cy="16" r="2" fill="#d86a10" /><circle cx="17" cy="12" r="1.500" fill="#d86a10" /></>,
  <><P s="#8e3a96" w={1.200} f="#fff" d="M7 1.500Q9 0 11 1.500L16.500 7.500Q18 9 16.500 10.500L11 16.500Q9 18 7 16.500L1.500 10.500Q0 9 1.500 7.500zM5 4l9 9M13 4l-9 9" /></>,
  <><P s="#1b7fd6" w={1.300} f="#fff" d="M.8 1.500h9l7 7.500-7 8H.8L8 9zM5 6.500h8M5 12l7-8M9 16l6-8" /></>,
];

/* ---------- side panes ---------- */

const Chevs = () => <Ic w={13} h={13}><P s="#323130" w={1.200} d="M1 1l5.500 5.500L1 12M6.500 1L12 6.500 6.500 12" /></Ic>;
const Dots = ({ c }: { c: string }) => <Ic w={14} h={3} c={c}>{[0, 5, 10].map((x) => <rect key={x} x={x} y=".5" width="1.800" height="1.800" fill="#605e5c" />)}</Ic>;

function Filters() {
  return (
    <div className="flex w-[201px] shrink-0 flex-col border-l border-[#a19f9d] bg-white text-[12px] leading-[16px] text-[#252423]">
      <div className="flex h-[45px] items-center border-b border-[#a19f9d] pl-[8px]">
        <div className="mt-[4px] flex h-[32px] w-[180px] items-center border border-[#8a8886] pl-[10px]">
          <Ic w={17} h={17}><circle cx="10.500" cy="6" r="4.500" stroke={K} /><P d="M7 9.500L1 15.500" /></Ic>
          <div className="ml-[12px] mt-[1px] text-[12.500px]"><T w={39}>Search</T></div>
        </div>
      </div>
      {([["Filters on this page", 101, "mt-[17px]"], ["Filters on all pages", 99, "mt-[27px]"]] as [string, number, string][]).map(([t, w, mt]) => (
        <div key={t} className={`${mt} pl-[8px]`}>
          <div className="flex h-[16px] items-center justify-between pr-[10px]"><T w={w}>{t}</T><Dots c="mt-[3px]" /></div>
          <div className="mt-[8px] flex h-[46px] w-[184px] items-center justify-center rounded-[2px] border border-[#c8c6c4] pt-[2px]"><T w={107}>Add data fields here</T></div>
        </div>
      ))}
    </div>
  );
}

function Visualizations() {
  return (
    <div className="flex w-[181px] shrink-0 flex-col border-l border-[#dddbd9] bg-[#f3f2f1] text-[12px] leading-[16px] text-[#252423]">
      <div className="flex h-[36px] items-center justify-between pl-[8px] pr-[8px] pt-[2px] text-[16px] font-semibold leading-[22px]"><T w={99}>Visualizations</T><Chevs /></div>
      <div className="mt-[2px] pl-[8px]"><T w={62}>Build visual</T></div>
      <div className="mt-[3px] flex h-[36px] items-start pl-[8px]">
        <div className="flex h-[32px] w-[32px] items-center justify-center rounded-[2px] bg-[#d2d0ce]">
          <Ic w={26} h={26}>
            <P w={1.200} d="M1 1.500h19" />
            <Rc x={1.500} y={6.500} w={23} h={7} f={GREEN} s="none" /><Rc x={1.500} y={17} w={23} h={7} f={GREEN} s="none" />
            <path d="M1.500 6.500h23v7h-23zM1.500 17h23v7h-23z" stroke={K} strokeWidth="1.200" strokeDasharray="1.800 1.400" />
          </Ic>
        </div>
        <Ic w={26} h={26} c="ml-[37px] mt-[3px]">
          <P w={1.200} d="M18 8L11.500 1.500h-10v23H11M11.500 1.500V8H16M24.500 10L17 20l-2-2L24 10z" />
          <P w={1.200} d="M15 18c-4 0-3 5-6 6.500 4 1 8 0 8-4.500" />
        </Ic>
      </div>
      <Ic w={180} h={10}><P s={M} d="M0 8.500h17L24.500 1 32 8.500h148" /></Ic>
      <div className="grid grid-cols-[repeat(6,28px)] grid-rows-[repeat(7,28px)] pl-[11px] pt-[10px]">
        {viz.map((v, i) => <svg key={i} width="18" height="18" viewBox="0 0 18 18" fill="none" className="overflow-visible">{v}</svg>)}
      </div>
      <Dots c="ml-[13px] mt-[7px]" />
      <div className="mt-[17px] h-px bg-[#d8d6d4]" />
      <div className="mt-[9px] pl-[12px]"><T w={34}>Values</T></div>
      <div className="ml-[4px] mt-[5px] flex h-[28px] w-[170px] items-center border border-dashed border-[#bebbb8] bg-white pl-[10px] pt-[2px]"><T w={107}>Add data fields here</T></div>
      <div className="mt-[11px] pl-[12px] font-semibold text-[#484644]"><T w={69}>Drill through</T></div>
      <div className="mt-[9px] flex items-center justify-between pl-[12px] pr-[22px]"><T w={66}>Cross-report</T>
        <div className="flex h-[16px] w-[32px] items-center gap-[2px] rounded-full border border-[#797775] bg-white pl-[4px] text-[9px] leading-[12px] text-[#605e5c]"><span className="h-[8px] w-[8px] rounded-full bg-[#605e5c]" /><T w={13}>Off</T></div>
      </div>
      <div className="mt-[11px] flex items-center justify-between pl-[12px] pr-[22px]"><T w={74}>Keep all filters</T>
        <div className="flex h-[16px] w-[32px] items-center gap-[2px] rounded-full bg-[#117865] pl-[5px] text-[9px] font-semibold leading-[12px] text-white"><T w={12}>On</T><span className="h-[8px] w-[8px] rounded-full bg-white" /></div>
      </div>
      <div className="ml-[4px] mt-[10px] flex h-[26px] w-[170px] items-center border border-dashed border-[#bebbb8] bg-white pl-[8px] pt-[2px]"><T w={151}>Add drill-through fields here</T></div>
    </div>
  );
}

function DataPane() {
  const f: [string, number, boolean][] = [["fuel", 20, false], ["km_driven", 54, true], ["name", 30, false], ["owner", 33, false], ["seller_type", 56, false], ["selling_price", 66, true], ["transmission", 66, false], ["year", 23, true]];
  return (
    <div className="flex w-[181px] shrink-0 flex-col border-l border-[#dddbd9] bg-[#f3f2f1] text-[12px] leading-[16px] text-[#323130]">
      <div className="flex h-[36px] items-center justify-between pl-[8px] pr-[8px] pt-[2px] text-[16px] font-semibold leading-[22px] text-[#252423]"><T w={34}>Data</T><Chevs /></div>
      <div className="ml-[4px] mt-[9px] flex h-[24px] w-[172px] items-center rounded-[4px] border border-[#d1d1d1] border-b-[#616161] bg-white pl-[11px] text-[13px] text-[#707070]">
        <Ic w={15} h={15}><circle cx="6.500" cy="6.500" r="5.500" stroke="#616161" strokeWidth="1.100" /><P s="#616161" w={1.100} d="M10.500 10.500l4 4" /></Ic>
        <div className="ml-[7px]"><T w={41}>Search</T></div>
      </div>
      <div className="mt-[12px] flex h-[18px] items-center pl-[13px]">
        <Ic w={11} h={7}><P s="#605e5c" d="M.5 .5l5 5 5-5" /></Ic>
        <Ic w={13} h={13} c="ml-[5px]"><Rc x={.7} y={.7} w={11.500} h={11.500} r={2} sw={1.200} /><P w={1.100} d="M.5 4.500h12M.5 8.500h12M4.500 .5v12M8.500 .5v12" /></Ic>
        <div className="ml-[5px] mt-px"><T w={124}>CAR DETAILS FROM C...</T></div>
      </div>
      <div className="mt-[3px] flex flex-col">
        {f.map(([t, w, s]) => (
          <div key={t} className="flex h-[24px] items-center pl-[44px]">
            <div className="h-[12px] w-[12px] rounded-[2px] border border-[#797775]" />
            <div className="flex w-[26px] justify-end pr-[7px]">
              {s && <Ic w={11} h={12}><P w={1.200} d="M10 2.500V1H1l5 5-5 5h9V9.500" /></Ic>}
            </div>
            <div className="mt-[2px]"><T w={w}>{t}</T></div>
          </div>
        ))}
      </div>
    </div>
  );
}

/* ---------- bottom bars ---------- */

function Tabs() {
  return (
    <div className="flex h-[35px] shrink-0 bg-[#f3f2f1]">
      <div className="mb-[4px] ml-[10px] flex w-[24px] flex-col items-center justify-between border-b-[3px] border-[#117865] pt-[6px]">
        <Ic w={20} h={16}><P s="#484644" w={1.200} d="M1 1.500h18v10H1zM10 11.500v3M6.500 14.500h7" /></Ic>
      </div>
      <Ic w={14} h={22} c="ml-[25px] mt-[4px]"><P s="#484644" w={1.300} d="M1 1.500h12v19H1z" /><rect x="6" y="16.500" width="2" height="1.500" fill="#484644" /></Ic>
      <Ic w={5} h={8} c="ml-[20px] mt-[14px]"><path d="M5 0v8L0 4z" fill="#c8c6c4" /></Ic>
      <Ic w={5} h={8} c="ml-[17px] mt-[14px]"><path d="M0 0v8l5-4z" fill="#b3b0ad" /></Ic>
      <div className="ml-[7px] flex w-[77px] items-center justify-center border-b-[4px] border-l border-b-[#117865] border-l-[#8a8886] bg-white pt-[6px] text-[12px] leading-[16px] text-[#252423]"><T w={35}>Page 1</T></div>
      <div className="flex w-[39px] items-center justify-center bg-[#117865]"><Ic w={11} h={11}><P s="#fff" w={3} d="M0 5.500h11M5.500 0v11" /></Ic></div>
    </div>
  );
}

function StatusBar() {
  return (
    <div className="flex h-[24px] shrink-0 items-center border-t border-[#dddbd9] bg-[#f3f2f1] text-[12px] leading-[16px] text-[#484644]">
      <div className="ml-[4px] mt-[3px]"><T w={59}>Page 1 of 1</T></div>
      <Ic w={125} h={12} c="ml-auto mr-[12px]">
        <P s="#605e5c" w={1.600} d="M0 6h5" />
        <P s="#605e5c" d="M9 5.500h100M59.500 3v5M115 5.500h8M119 1.500v8" />
        <rect x="67" y="0" width="4" height="11" fill="#605e5c" />
      </Ic>
      <div className="mr-[13px] mt-px text-[#605e5c]"><T w={28}>160%</T></div>
      <Ic w={16} h={12} c="mr-[18px]"><P s="#605e5c" d="M.5 .5h15v11H.5zM3.500 5V3.500H6M10 3.500h2.500V5M3.500 7.500V9H6M10 9h2.500V7.500" /></Ic>
    </div>
  );
}

function Task({ w, on, active, children }: { w: string; on?: boolean; active?: boolean; children: ReactNode }) {
  return (
    <div className={`${w} flex h-[40px] shrink-0 flex-col items-center justify-between ${active ? "rounded-[4px] border border-[#3a3a3a] bg-[#2d2d2d] pt-[6px]" : "pt-[7px]"}`}>
      {children}
      <div className={`h-[3px] rounded-full ${active ? "w-[16px] bg-[#4cc2ff]" : on ? "w-[6px] bg-[#9a9a9a]" : "w-[6px]"}`} />
    </div>
  );
}

function Taskbar() {
  return (
    <div className="flex h-[48px] shrink-0 items-center border-t border-[#484644] bg-[#1c1c1c] pb-px text-white">
      <svg width="24" height="24" viewBox="0 0 24 24" className="ml-[20px] shrink-0">
        <defs><linearGradient id="win" x1="0" y1="0" x2="1" y2="1"><stop offset="0" stopColor="#8cecff" /><stop offset="1" stopColor="#0c94f0" /></linearGradient></defs>
        <path d="M.5 .5h11v11H.5zM12.500 .5h11v11h-11zM.5 12.500h11v11H.5zM12.500 12.500h11v11h-11z" fill="url(#win)" />
      </svg>
      <div className="ml-[13px] flex h-[32px] w-[220px] items-center rounded-full border border-[#4c4c4c] bg-[#3a3a3a]">
        <Ic w={16} h={16} c="ml-[11px]"><circle cx="7" cy="7" r="5.500" stroke="#e8e8e8" strokeWidth="1.600" /><P s="#e8e8e8" w={1.600} d="M11 11l4 4" /></Ic>
        <div className="ml-[9px] text-[13.500px] leading-[18px] text-[#d0d0d0]"><T w={42}>Search</T></div>
        <Ic w={42} h={22} c="ml-[92px]">
          <circle cx="10" cy="10.500" r="9" fill="#e0602a" />
          <P s="#5a2010" w={1.100} d="M10 1.500v18M1 10.500h18M4 4c4 4 4 9 0 13M16 4c-4 4-4 9 0 13" />
          <path d="M25 6c2-3 6-4 10-2l5 2-1 3-4 1c0 3-2 4-4 4l-4 6-4-2 2-6z" fill="#b8b8b8" /><circle cx="31" cy="8" r="3" fill="#8a8a8a" />
        </Ic>
      </div>
      <Task w="ml-[4px] w-[40px]"><Ic w={24} h={24}><rect x="6" y="1" width="18" height="16" fill="#eee" /><rect x="0" y="7" width="18" height="16" fill="#777" fillOpacity=".85" /></Ic></Task>
      <Task w="ml-[4px] w-[40px]" on><Ic w={24} h={24}><path d="M0 3c0-1 .5-2 2-2h6l2 3h12c1 0 2 1 2 2v15c0 1-1 2-2 2H2c-1 0-2-1-2-2z" fill="#ffcf48" /><path d="M0 3c0-1 .5-2 2-2h6l2 3-2 2H0z" fill="#e0a010" /><path d="M4 22v-4c0-1 1-2 2-2h12c1 0 2 1 2 2v4z" fill="#1878c8" /><rect x="7" y="18.500" width="10" height="2" fill="#0a4a8a" /></Ic></Task>
      <Task w="ml-[4px] w-[40px]">
        <Ic w={24} h={24}><defs><linearGradient id="mm" x1="1" y1="0" x2="0" y2="1"><stop offset="0" stopColor="#1a8cff" /><stop offset="1" stopColor="#5a2cf0" /></linearGradient></defs><rect width="24" height="24" fill="url(#mm)" /><P s="#fff" w={2.200} d="M4 17.500L9 7M9 17.500L14 7M13 17.500L18.500 7v10.500M15 14h3" /></Ic>
      </Task>
      <Task w="ml-[4px] w-[40px]"><Ic w={22} h={25}><path d="M6 0h10l2 2.500L21 4l-1 4 1 3-4 9-6 4-6-4-4-9 1-3-1-4 3-1.500z" fill="#fb5020" /><path d="M5 6l6-1 6 1 1 4-3 3 1 3-5 4-5-4 1-3-3-3z" fill="#fff" /><path d="M6 9l3 1-1 2zM16 9l-3 1 1 2zM9 14h4l-2 2z" fill="#fb5020" /></Ic></Task>
      <Task w="ml-[4px] w-[40px]" on>
        <Ic w={34} h={28} c="-mt-[6px]">
          <circle cx="17" cy="17" r="12" fill="#fbc116" /><path d="M17 17L6.600 11a12 12 0 0 1 20.800 0z" fill="#e33b2e" /><path d="M17 17l-6 10.400A12 12 0 0 1 6.600 11z" fill="#229342" />
          <circle cx="17" cy="17" r="5.800" fill="#fff" /><circle cx="17" cy="17" r="4.600" fill="#3a78e8" />
          <circle cx="26" cy="8" r="8" fill="#455a64" /><text x="23" y="11.500" fontFamily={UI} fontSize="9" fontWeight="600" fill="#fff">A</text>
        </Ic>
      </Task>
      <Task w="ml-[5px] w-[36px]" active><Ic w={20} h={24}><rect x="12" y="0" width="8" height="24" rx="1" fill="#d8a010" /><rect x="6" y="6" width="8" height="18" rx="1" fill="#eebc20" /><rect x="0" y="12" width="8" height="12" rx="1" fill="#fbe070" /></Ic></Task>
      <Task w="ml-[6px] w-[42px]" on><Ic w={24} h={26}><rect x="0" y="0" width="17" height="22" rx="2" fill="#eee" /><path d="M3 14V3h10v8" stroke="#d83a20" strokeWidth="3" strokeDasharray="2.500 1.500" /><P s="#999" w={2} d="M8 16h11M15 4v12" /><P s="#22a0e8" w={1.600} d="M15 16l-1 4M16 15l4-.5" /><circle cx="13.500" cy="22" r="2" stroke="#22a0e8" strokeWidth="1.500" /><circle cx="21" cy="14" r="2" stroke="#22a0e8" strokeWidth="1.500" /></Ic></Task>
      <Task w="ml-[2px] w-[42px]" on><Ic w={22} h={24}><defs><linearGradient id="ph" x1="0" y1="0" x2="1" y2="1"><stop offset="0" stopColor="#1a6ad0" /><stop offset="1" stopColor="#8a4a90" /></linearGradient></defs><rect width="22" height="24" rx="3" fill="url(#ph)" /><path d="M0 20l9-10c1-1 2-1 3 0l10 11c0 2-1 3-3 3H3c-2 0-3-2-3-4z" fill="#3cc0f0" /><path d="M4 24l6-7 7 7z" fill="#0a70c0" /><circle cx="16" cy="4.500" r="2" fill="#fff" /></Ic></Task>
      <div className="ml-auto flex items-center">
        <Ic w={11} h={7} c="mr-[18px]"><P s="#fff" w={1.300} d="M1 6l4.500-4.500L10 6" /></Ic>
        <Ic w={18} h={18} c="mr-[15px]"><P s="#fff" w={1.200} d="M1 7c2-7 12-7 14-1M15 1.500V6h-4.500M6 15.500C4 14.500 2 13 1.500 11.500M1 16v-4.500h4.500" /><circle cx="13" cy="13" r="4" fill="#ff9800" /></Ic>
        <Ic w={16} h={13} c="mr-[8px]"><P s="#fff" w={1.200} d="M.5 5c4-5 11-5 15 0M2.800 7.500c3-4 7.500-4 10.500 0M5.200 9.800c2-2.500 4-2.500 5.800 0" /><circle cx="8" cy="11.500" r="1.200" fill="#fff" /></Ic>
        <Ic w={16} h={12} c="mr-[8px]"><P s="#fff" w={1.100} d="M.5 4h3l4-3.500v11L3.500 8h-3zM10 4l5 5M15 4l-5 5" /></Ic>
        <Ic w={17} h={11} c="mr-[16px]"><Rc x={.6} y={.6} w={13.500} h={9.500} r={2} s="#fff" sw={1.200} /><rect x="2.500" y="2.500" width="5" height="6" fill="#fff" /><P s="#fff" w={1.500} d="M15.500 3.500v4" /></Ic>
        <div className="mr-[8px] flex flex-col items-end text-[12px] leading-[16px]"><T w={43}>2:21 PM</T><T w={62}>10/22/2024</T></div>
        <Ic w={14} h={16} c="mr-[18px]"><path d="M7 .5c3.500 0 5 2.500 5 5.500v4l2 3H0l2-3V6C2 3 3.500 .5 7 .5zM5 14h4c0 2-4 2-4 0z" fill="#8fe4fc" /></Ic>
        <svg width="24" height="24" viewBox="0 0 24 24" fill="none" className="mr-[19px] shrink-0">
          <g transform="scale(.72)"><CopilotArt /></g>
          <rect x="5" y="16" width="18" height="7" rx="1.500" fill="#ffc40c" />
          <text x="7" y="22" fontFamily={UI} fontWeight="700" fontSize="6.500" fill="#222" textLength="14">PRE</text>
        </svg>
      </div>
    </div>
  );
}

/* ---------- shell ---------- */

function LeftRail() {
  return (
    <div className="flex w-[41px] shrink-0 flex-col border-r border-[#d8d6d4] bg-[#f3f2f1]">
      <div className="flex h-[40px] items-center border-l-[3px] border-[#117865] pl-[10px]">
        <Ic w={16} h={16}><P w={1.200} s="#111" d="M1.500 1v12.500H16M4 4.500h2v6.500H4zM8 6.500h2v4.500H8zM12 2.500h2v8.500h-2z" /></Ic>
      </div>
      <div className="flex h-[40px] items-center pl-[13px]"><Ic w={16} h={16}><P s="#605e5c" d="M.5 .5h15v14H.5zM.5 4.500h15M.5 7.500h15M.5 11.500h15M5.500 4v10M10.500 4v10" /></Ic></div>
      <div className="flex h-[40px] items-center pl-[12px]"><Ic w={18} h={18}><P s="#605e5c" d="M.5 5.500h7v7h-7zM.5 9h7M10.500 .5h7v5h-7zM10.500 8.500h7v8h-7zM10.500 12.500h7M4 5.500V2.500h6.500M4 12.500v3h6.500" /></Ic></div>
      <div className="flex h-[40px] items-center pl-[11px]">
        <Ic w={18} h={18}><P s="#605e5c" d="M4.500 9V.5h6l4 4V10M10.500 .5v4h4M16.500 6c1 3 1 6-.5 9" /><text x="0" y="16.500" fontFamily={UI} fontSize="6.500" fill="#484644" textLength="14">DAX</text></Ic>
      </div>
    </div>
  );
}

export default function App() {
  return (
    <div className="flex h-[1200px] w-[1920px] flex-col overflow-hidden bg-white font-['Open_Sans','Noto_Sans',sans-serif]">
      <TitleBar />
      <Ribbon />
      <div className="flex h-[967px] shrink-0">
        <LeftRail />
        <div className="flex w-[1517px] shrink-0 flex-col">
          <div className="flex h-[36px] shrink-0 items-center bg-[#fff7ac] text-[12px] leading-[16px] text-[#323130]">
            <Ic w={16} h={16} c="ml-[12px]"><P w={1.100} d="M8 1.500L15.200 14.500H.8zM8 6v4.500M8 11.500v1.500" /></Ic>
            <div className="ml-[8px] mt-[2px]"><T w={367}>There are pending changes in your queries that haven't been applied.</T></div>
            <div className="ml-auto mr-[7px] flex h-[24px] w-[115px] items-center justify-center border border-[#8a8886] bg-white pt-[2px]"><T w={80}>Apply changes</T></div>
            <div className="mr-[8px] flex h-[24px] w-[123px] items-center justify-center border border-[#8a8886] bg-white pt-[2px]"><T w={88}>Discard changes</T></div>
            <Ic w={13} h={13} c="mr-[10px]"><P w={1.200} d="M.5 .5l12 12M12.500 .5l-12 12" /></Ic>
          </div>
          <div className="flex h-[896px] shrink-0">
            <div className="flex w-[1316px] shrink-0 flex-col bg-white">
              <div className="flex">
                <Chart />
                <div className="h-[692px] w-[8px] rounded-b-full bg-[#c8c8c8]" />
              </div>
              <div className="mt-[2px] h-[8px] w-[826px] rounded-full bg-[#c8c8c8]" />
            </div>
            <Filters />
          </div>
          <Tabs />
        </div>
        <Visualizations />
        <DataPane />
      </div>
      <StatusBar />
      <div className="h-px shrink-0 bg-black" />
      <Taskbar />
    </div>
  );
}
